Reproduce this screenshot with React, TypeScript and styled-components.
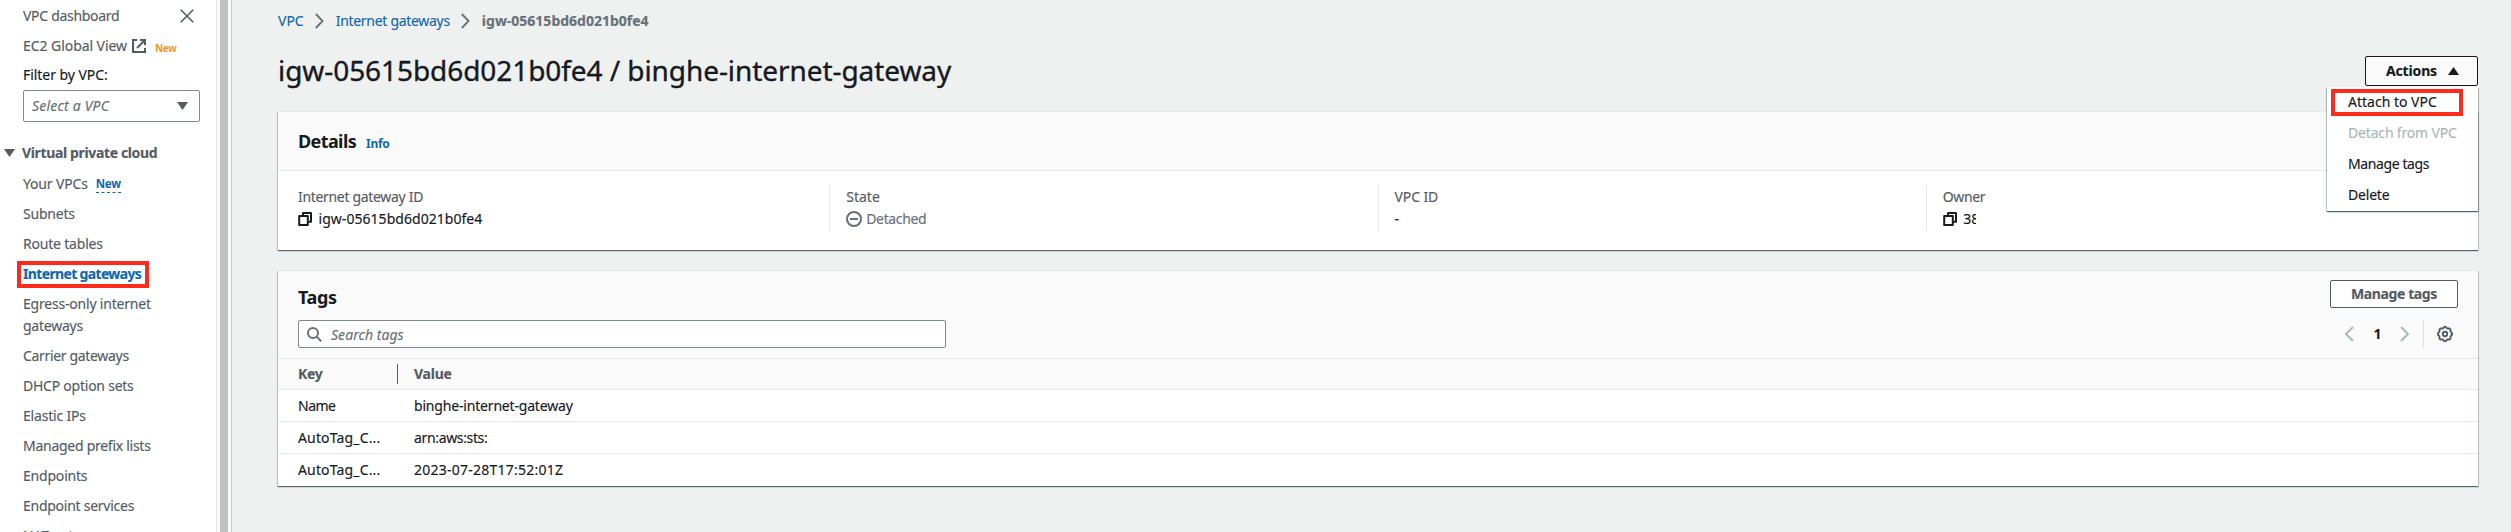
import React from 'react';
import styled, { createGlobalStyle, css } from 'styled-components';

const GlobalStyle = createGlobalStyle`
  *, *::before, *::after { box-sizing: border-box; }
  body {
    margin: 0;
    background: #eff1f1;
    color: #16191f;
    font-family: "Noto Sans", "Open Sans", sans-serif;
    font-size: 14px;
    line-height: 22px;
    overflow: hidden;
  }
  svg { display: block; flex: none; }
`;

/* ---------- shared ---------- */

const Label = styled.span<{ $track?: number }>`
  letter-spacing: ${(p) => p.$track ?? 0}px;
  white-space: nowrap;
  -webkit-text-stroke: 0.15px currentColor;
`;

const marker = css`
  position: relative;
  &::after {
    content: '';
    position: absolute;
    border: 4px solid #fd2b1b;
    pointer-events: none;
  }
`;

const Page = styled.div`
  display: flex;
  width: 100%;
  height: 532px;
  overflow: hidden;
`;

/* ---------- sidebar ---------- */

const Sidebar = styled.nav`
  flex: none;
  width: 217px;
  height: 532px;
  padding: 5px 16px 0 23px;
  background: #fff;
  border-right: 1px solid #e2e4e4;
  color: #545b64;
  overflow: hidden;
`;

const ScrollTrack = styled.div`
  flex: none;
  width: 15px;
  padding: 0 3px;
  background: #fafafa;
  border-right: 1px solid #c6cacb;
`;

const ScrollThumb = styled.div`
  height: 100%;
  background: #c1c1c1;
`;

const SideRow = styled.div`
  display: flex;
  align-items: center;
  height: 22px;
  margin-bottom: 8px;
`;

const CloseIcon = styled.svg`
  margin-left: auto;
  margin-right: 6px;
`;

const ExternalIcon = styled.svg`
  margin: 0 9px 0 5px;
`;

const NewBadge = styled.span`
  color: #ff9321;
  font-size: 10px;
  font-weight: 700;
  letter-spacing: -0.3px;
  padding-top: 3px;
`;

const NewLink = styled.a`
  margin-left: 8px;
  height: 18px;
  padding-top: 1px;
  color: #0f68ae;
  font-size: 11.5px;
  font-weight: 700;
  line-height: 16px;
  letter-spacing: -0.3px;
  border-bottom: 1px dashed #0f68ae;
`;

const FilterLabel = styled.div`
  height: 22px;
  margin: -1px 0 4px;
  color: #16191f;
`;

const SelectBox = styled.div`
  display: flex;
  align-items: center;
  justify-content: space-between;
  width: 177px;
  height: 32px;
  padding: 0 11px 0 8px;
  border: 1px solid #7c8a8b;
  border-radius: 2px;
  color: #687078;
  font-style: italic;
`;

const SectionHeading = styled.div`
  display: flex;
  align-items: center;
  gap: 7px;
  height: 22px;
  margin: 20px 0 9px -19px;
  font-weight: 700;
`;

const SideItem = styled.div<{ $active?: boolean }>`
  display: flex;
  align-items: center;
  width: fit-content;
  margin-bottom: 8px;
  ${(p) =>
    p.$active &&
    css`
      ${marker}
      color: #0f68ae;
      font-weight: 700;
      &::after { left: -6px; top: -2px; width: 132px; height: 27px; }
    `}
`;

/* ---------- main ---------- */

const Main = styled.main`
  flex: 1;
  min-width: 0;
  padding: 10px 33px 0 46px;
`;

const Breadcrumbs = styled.div`
  display: flex;
  align-items: center;
  height: 22px;
  color: #0f68ae;
`;

const Crumb = styled(Label)<{ $current?: boolean }>`
  ${(p) => p.$current && css`color: #687078; font-weight: 700;`}
`;

const CrumbArrow = styled.svg`
  margin: 0 11.5px;
`;

const TitleRow = styled.div`
  display: flex;
  justify-content: space-between;
  height: 36px;
  margin: 20px 0 23px;
`;

const Title = styled.h1`
  margin: 0;
  font-size: 28px;
  line-height: 36px;
  font-weight: 400;
  letter-spacing: -0.07px;
  -webkit-text-stroke: 0.35px currentColor;
`;

const MenuAnchor = styled.div`
  position: relative;
  padding-top: 4px;
`;

const ActionsButton = styled.button`
  display: flex;
  align-items: center;
  justify-content: space-between;
  width: 113px;
  height: 30px;
  padding: 0 18px 0 20px;
  border: 1px solid #16191f;
  border-radius: 2px;
  background: #fafafa;
  color: #16191f;
  font: 700 14px/22px "Noto Sans", sans-serif;
`;

const Menu = styled.div`
  position: absolute;
  z-index: 2;
  top: 35px;
  right: 0;
  width: 151px;
  height: 124px;
  background: #fff;
  box-shadow: 0 1px 1px 0 rgba(0, 28, 36, 0.5), 1px 1px 1px 0 rgba(0, 28, 36, 0.2), -1px 1px 1px 0 rgba(0, 28, 36, 0.2);
`;

const MenuItem = styled.div<{ $disabled?: boolean; $marked?: boolean }>`
  height: 31px;
  padding: 4px 0 5px 21px;
  color: ${(p) => (p.$disabled ? '#aab7b8' : '#16191f')};
  ${(p) =>
    p.$marked &&
    css`
      ${marker}
      &::after { left: 4px; top: 2px; width: 132px; height: 27px; }
    `}
`;

const Card = styled.section`
  background: #fff;
  border-top: 1px solid #e6e9e9;
  box-shadow: 0 1px 1px 0 rgba(0, 28, 36, 0.5), 1px 1px 1px 0 rgba(0, 28, 36, 0.15), -1px 1px 1px 0 rgba(0, 28, 36, 0.15);
`;

const DetailsCard = styled(Card)`
  height: 139px;
  margin-bottom: 20px;
`;

const TagsCard = styled(Card)`
  height: 216px;
`;

const CardHeader = styled.div`
  display: flex;
  align-items: baseline;
  gap: 10px;
  height: 59px;
  padding: 18px 20px 0;
  background: #fafafa;
  border-bottom: 1px solid #e6e9e9;
`;

const CardTitle = styled.h2`
  margin: 0;
  font-size: 18px;
  line-height: 22px;
  font-weight: 700;
  letter-spacing: -0.6px;
`;

const InfoLink = styled.a`
  color: #0f68ae;
  font-size: 12px;
  font-weight: 700;
  letter-spacing: -0.3px;
`;

const DetailGrid = styled.div`
  display: grid;
  grid-template-columns: repeat(4, 1fr);
  padding: 15px 4px 0 3px;
`;

const Detail = styled.div`
  height: 44px;
  padding-left: 16px;
  border-left: 1px solid #e4e7e7;
  &:first-child { border-left-color: transparent; }
`;

const DetailLabel = styled.div`
  height: 22px;
  color: #545b64;
`;

const DetailValue = styled.div<{ $muted?: boolean }>`
  display: flex;
  align-items: center;
  gap: ${(p) => (p.$muted ? 4 : 5.5)}px;
  height: 22px;
  color: ${(p) => (p.$muted ? '#687078' : '#16191f')};
`;

const Clipped = styled.span<{ $w: number }>`
  display: block;
  width: ${(p) => p.$w}px;
  overflow: hidden;
  white-space: nowrap;
`;

/* ---------- tags ---------- */

const TagsHeader = styled.div`
  height: 88px;
  padding: 9px 20px 0;
  background: #fafafa;
  border-bottom: 1px solid #e6e9e9;
`;

const TagsTop = styled.div`
  display: flex;
  justify-content: space-between;
  height: 40px;
`;

const TagsTitle = styled(CardTitle)`
  padding-top: 6px;
  letter-spacing: -0.4px;
`;

const ManageButton = styled.button`
  width: 128px;
  height: 28px;
  padding: 0;
  border: 1px solid #545b64;
  border-radius: 2px;
  background: #fff;
  color: #545b64;
  font: 700 14px/22px "Noto Sans", sans-serif;
`;

const Tools = styled.div`
  display: flex;
  align-items: center;
  justify-content: space-between;
  height: 28px;
`;

const Search = styled.div`
  display: flex;
  align-items: center;
  gap: 9px;
  width: 648px;
  height: 28px;
  padding: 1px 0 0 8px;
  border: 1px solid #7c8a8b;
  border-radius: 2px;
  background: #fff;
  color: #687078;
  font-style: italic;
`;

const Pager = styled.div`
  display: flex;
  align-items: center;
  height: 28px;
  padding-right: 5px;
`;

const PageNumber = styled.span`
  width: 46px;
  padding-left: 1px;
  text-align: center;
  font-weight: 700;
`;

const PagerRule = styled.span`
  width: 1px;
  height: 28px;
  margin: 0 13px;
  background: #dfe3e3;
`;

const Row = styled.div<{ $head?: boolean }>`
  display: grid;
  grid-template-columns: 116px 1fr;
  align-items: center;
  height: ${(p) => (p.$head ? 31 : 32)}px;
  padding-left: 20px;
  border-bottom: 1px solid #e6e9e9;
  ${(p) => p.$head && css`background: #fafafa; color: #545b64; font-weight: 700;`}
  &:last-child { border-bottom: 0; }
`;

const KeyCell = styled.div<{ $head?: boolean }>`
  width: 100px;
  height: ${(p) => (p.$head ? 20 : 22)}px;
  line-height: ${(p) => (p.$head ? 20 : 22)}px;
  border-right: ${(p) => (p.$head ? '1px solid #545b64' : '0')};
`;

const ValueCell = styled.div`
  min-width: 0;
`;

const CopyIcon = () => (
  <svg width="15" height="16" viewBox="0 0 15 16" fill="none" stroke="#16191f" strokeWidth="2" strokeLinejoin="round">
    <path d="M5 4V2H13V10.8H10.5" />
    <path d="M1.2 5H9.8V14H1.2Z" />
  </svg>
);

const Triangle = ({ up, color = '#545b64' }: { up?: boolean; color?: string }) => (
  <svg width="11" height="8" viewBox="0 0 11 8" fill={color}>
    <path d={up ? 'M5.5 0L11 8H0Z' : 'M0 0H11L5.5 8Z'} />
  </svg>
);

const Chevron = ({ left }: { left?: boolean }) => (
  <svg width="10" height="16" viewBox="0 0 10 16" fill="none" stroke="#aab7b8" strokeWidth="2">
    <path d={left ? 'M9 1L2 8L9 15' : 'M1 1L8 8L1 15'} />
  </svg>
);

const Arrow = () => (
  <CrumbArrow width="9" height="16" viewBox="0 0 9 16" fill="none" stroke="#687078" strokeWidth="1.8">
    <path d="M.8 1L7.6 8L.8 15" />
  </CrumbArrow>
);

/* Scalloped outline of the preferences gear, eight lobes around the centre. */
const gearPath = (() => {
  const pts: string[] = [];
  for (let i = 0; i < 96; i++) {
    const a = (i / 96) * Math.PI * 2;
    const r = 6.65 + 0.55 * Math.cos(a * 8);
    pts.push(`${(8 + r * Math.cos(a)).toFixed(2)} ${(8 + r * Math.sin(a)).toFixed(2)}`);
  }
  return `M${pts.join('L')}Z`;
})();

const navItems: { text: string; track: number; active?: boolean; isNew?: boolean; wrap?: [string, number] }[] = [
  { text: 'Your VPCs', track: -0.16, isNew: true },
  { text: 'Subnets', track: -0.2 },
  { text: 'Route tables', track: -0.2 },
  { text: 'Internet gateways', track: -0.65, active: true },
  { text: 'Egress-only internet', track: -0.2, wrap: ['gateways', -0.24] },
  { text: 'Carrier gateways', track: -0.33 },
  { text: 'DHCP option sets', track: -0.24 },
  { text: 'Elastic IPs', track: -0.2 },
  { text: 'Managed prefix lists', track: -0.27 },
  { text: 'Endpoints', track: -0.2 },
  { text: 'Endpoint services', track: -0.26 },
  { text: 'NAT gateways', track: -0.2 },
];

export default function App() {
  return (
    <>
      <GlobalStyle />
      <Page>
        <Sidebar>
          <SideRow>
            <Label $track={-0.3}>VPC dashboard</Label>
            <CloseIcon width="14" height="14" viewBox="0 0 14 14" stroke="#545b64" strokeWidth="1.6">
              <path d="M.8 .8L13.2 13.2M13.2 .8L.8 13.2" />
            </CloseIcon>
          </SideRow>
          <SideRow>
            <Label $track={-0.06}>EC2 Global View</Label>
            <ExternalIcon width="14" height="14" viewBox="0 0 14 14" fill="none" stroke="#545b64" strokeWidth="2">
              <path d="M5.2 1H1V13H13V9M8 1H13V6M13 1L5 9" />
            </ExternalIcon>
            <NewBadge>New</NewBadge>
          </SideRow>
          <FilterLabel>
            <Label $track={-0.05}>Filter by VPC:</Label>
          </FilterLabel>
          <SelectBox>
            <Label $track={0.2}>Select a VPC</Label>
            <Triangle />
          </SelectBox>
          <SectionHeading>
            <Triangle />
            <Label $track={-0.36}>Virtual private cloud</Label>
          </SectionHeading>
          {navItems.map((n) => (
            <SideItem key={n.text} $active={n.active}>
              <div>
                <Label $track={n.track}>{n.text}</Label>
                {n.wrap && (
                  <>
                    <br />
                    <Label $track={n.wrap[1]}>{n.wrap[0]}</Label>
                  </>
                )}
              </div>
              {n.isNew && <NewLink>New</NewLink>}
            </SideItem>
          ))}
        </Sidebar>
        <ScrollTrack>
          <ScrollThumb />
        </ScrollTrack>
        <Main>
          <Breadcrumbs>
            <Crumb>VPC</Crumb>
            <Arrow />
            <Crumb $track={-0.3}>Internet gateways</Crumb>
            <Arrow />
            <Crumb $current>igw-05615bd6d021b0fe4</Crumb>
          </Breadcrumbs>
          <TitleRow>
            <Title>igw-05615bd6d021b0fe4 / binghe-internet-gateway</Title>
            <MenuAnchor>
              <ActionsButton>
                <Label $track={-0.15}>Actions</Label>
                <Triangle up color="#16191f" />
              </ActionsButton>
              <Menu>
                <MenuItem $marked>
                  <Label $track={0}>Attach to VPC</Label>
                </MenuItem>
                <MenuItem $disabled>
                  <Label $track={-0.17}>Detach from VPC</Label>
                </MenuItem>
                <MenuItem>
                  <Label $track={-0.4}>Manage tags</Label>
                </MenuItem>
                <MenuItem>
                  <Label $track={-0.2}>Delete</Label>
                </MenuItem>
              </Menu>
            </MenuAnchor>
          </TitleRow>

          <DetailsCard>
            <CardHeader>
              <CardTitle>Details</CardTitle>
              <InfoLink>Info</InfoLink>
            </CardHeader>
            <DetailGrid>
              <Detail>
                <DetailLabel>
                  <Label $track={-0.32}>Internet gateway ID</Label>
                </DetailLabel>
                <DetailValue>
                  <CopyIcon />
                  <Label $track={0.04}>igw-05615bd6d021b0fe4</Label>
                </DetailValue>
              </Detail>
              <Detail>
                <DetailLabel>
                  <Label>State</Label>
                </DetailLabel>
                <DetailValue $muted>
                  <svg width="16" height="16" viewBox="0 0 16 16" fill="none" stroke="#687078" strokeWidth="2">
                    <circle cx="8" cy="8" r="7" />
                    <path d="M4 8H12" />
                  </svg>
                  <Label $track={-0.35}>Detached</Label>
                </DetailValue>
              </Detail>
              <Detail>
                <DetailLabel>
                  <Label $track={-0.1}>VPC ID</Label>
                </DetailLabel>
                <DetailValue>
                  <Label>-</Label>
                </DetailValue>
              </Detail>
              <Detail>
                <DetailLabel>
                  <Label $track={-0.4}>Owner</Label>
                </DetailLabel>
                <DetailValue>
                  <CopyIcon />
                  <Clipped $w={13}>
                    <Label>38</Label>
                  </Clipped>
                </DetailValue>
              </Detail>
            </DetailGrid>
          </DetailsCard>

          <TagsCard>
            <TagsHeader>
              <TagsTop>
                <TagsTitle>Tags</TagsTitle>
                <ManageButton>
                  <Label $track={-0.4}>Manage tags</Label>
                </ManageButton>
              </TagsTop>
              <Tools>
                <Search>
                  <svg width="15" height="15" viewBox="0 0 15 15" fill="none" stroke="#687078" strokeWidth="2">
                    <circle cx="6" cy="6" r="5" />
                    <path d="M9.6 9.6L14.2 14.2" />
                  </svg>
                  <Label $track={0.05}>Search tags</Label>
                </Search>
                <Pager>
                  <Chevron left />
                  <PageNumber>1</PageNumber>
                  <Chevron />
                  <PagerRule />
                  <svg width="16" height="16" viewBox="0 0 16 16" fill="none" stroke="#545b64" strokeWidth="1.9">
                    <path d={gearPath} />
                    <circle cx="8" cy="8" r="2.2" />
                  </svg>
                </Pager>
              </Tools>
            </TagsHeader>
            <Row $head>
              <KeyCell $head>
                <Label $track={-0.3}>Key</Label>
              </KeyCell>
              <ValueCell>
                <Label $track={-0.25}>Value</Label>
              </ValueCell>
            </Row>
            <Row>
              <KeyCell>
                <Label $track={-0.5}>Name</Label>
              </KeyCell>
              <ValueCell>
                <Label $track={-0.18}>binghe-internet-gateway</Label>
              </ValueCell>
            </Row>
            <Row>
              <KeyCell>
                <Label $track={0.15}>AutoTag_C...</Label>
              </KeyCell>
              <ValueCell>
                <Label $track={-0.35}>arn:aws:sts:</Label>
              </ValueCell>
            </Row>
            <Row>
              <KeyCell>
                <Label $track={0.15}>AutoTag_C...</Label>
              </KeyCell>
              <ValueCell>
                <Label $track={0.24}>2023-07-28T17:52:01Z</Label>
              </ValueCell>
            </Row>
          </TagsCard>
        </Main>
      </Page>
    </>
  );
}
